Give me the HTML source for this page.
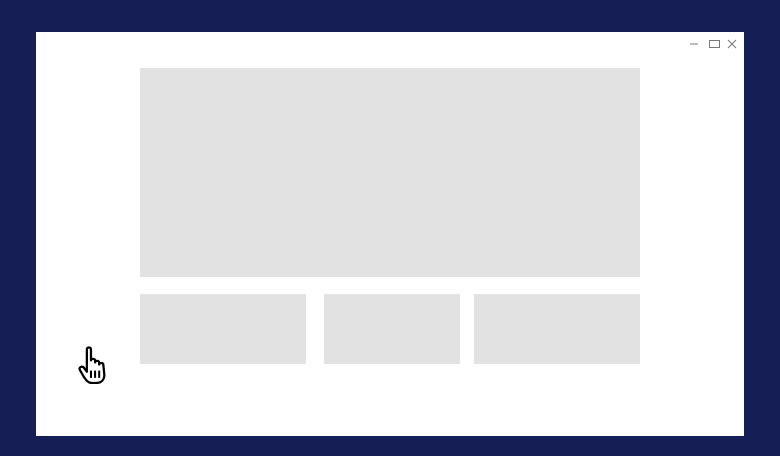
<!DOCTYPE html>
<html><head><style>
html,body{margin:0;padding:0}
body{width:780px;height:456px;background:#151f56;position:relative;overflow:hidden}
.win{position:absolute;left:36px;top:32px;width:708px;height:404px;background:#fff}
.b{position:absolute;background:#e2e2e2}
</style></head><body>
<div class="win"></div>
<div class="b" style="left:140px;top:68px;width:500px;height:209px"></div>
<div class="b" style="left:140px;top:294px;width:166px;height:70px"></div>
<div class="b" style="left:324px;top:294px;width:136px;height:70px"></div>
<div class="b" style="left:474px;top:294px;width:166px;height:70px"></div>
<svg style="position:absolute;left:684px;top:36px" width="56" height="16" viewBox="0 0 56 16">
<line x1="6" y1="8" x2="14" y2="8" stroke="#777" stroke-width="1"/>
<rect x="25.5" y="4.5" width="10" height="7" fill="none" stroke="#777" stroke-width="1"/>
<path d="M44 4 L52 12 M52 4 L44 12" stroke="#777" stroke-width="1"/>
</svg>
<svg style="position:absolute;left:75px;top:346px" width="34" height="38" viewBox="1 0 28 37">
<path d="M10 3 C10 1 14 1 14 3 L14 14 C14 12 18 12 18 14 L18 16 C18 14 22 14 22 16 L22 18 C22 16 26 16 26 18 L27 28 C27 33 24 36 19 36 L15 36 C11 36 9 33 7 30 L3 23 C2 21 5 19 7 21 L10 25 Z" fill="#fff" stroke="#000" stroke-width="2.2" stroke-linejoin="round"/>
<path d="M14 24 V31 M18 24 V31 M22 24 V31" stroke="#000" stroke-width="2"/>
</svg>
</body></html>
